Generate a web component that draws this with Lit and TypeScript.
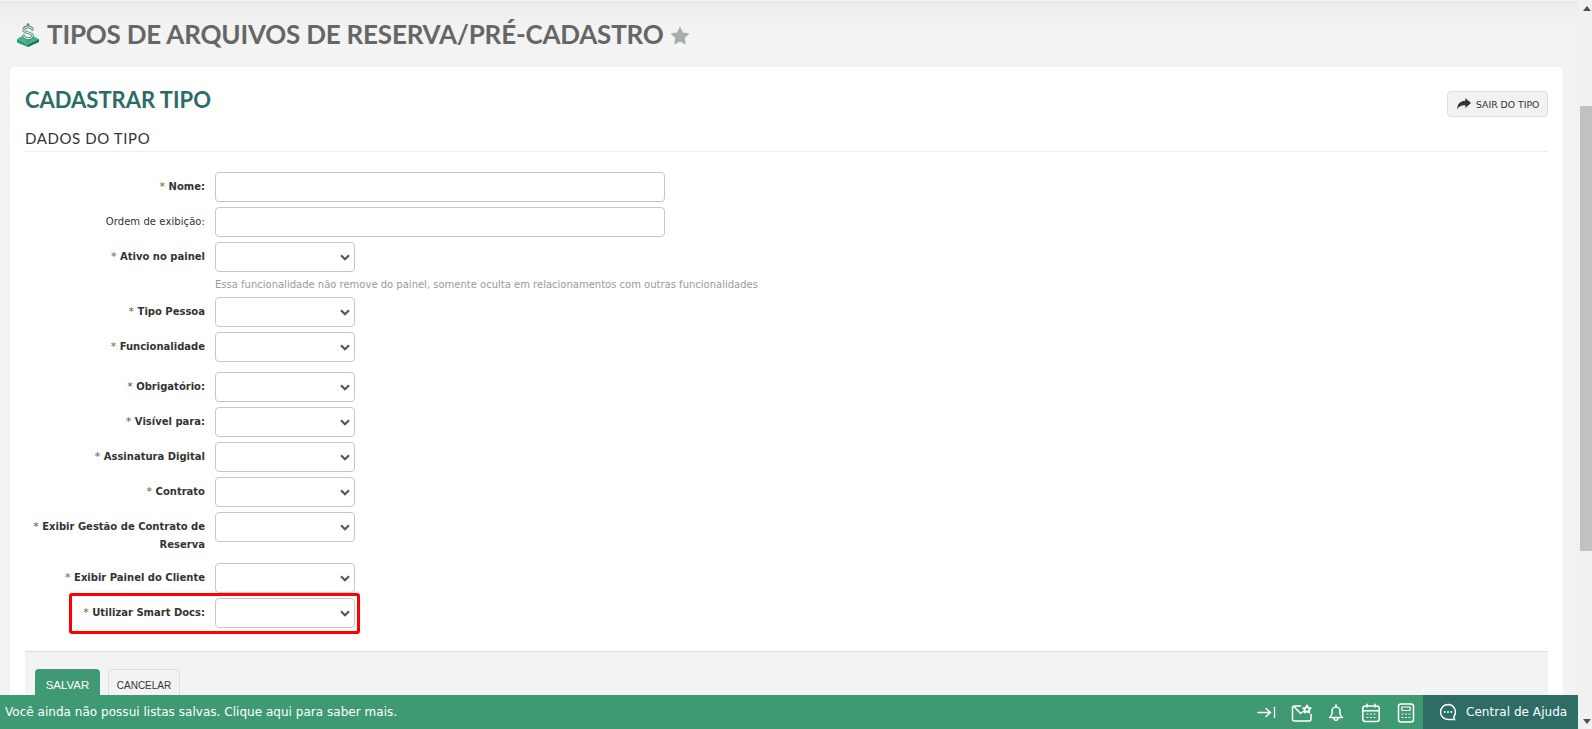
import { LitElement, html, css, svg } from "lit";
import { customElement } from "lit/decorators.js";

type Row = { label: string; req?: boolean; plain?: boolean; kind: "input" | "select"; hint?: string; cls?: string; star?: string; red?: boolean };

const ROWS: Row[] = [
  { label: "Nome:", req: true, kind: "input", star: "brown" },
  { label: "Ordem de exibição:", plain: true, kind: "input" },
  { label: "Ativo no painel", req: true, kind: "select", star: "brown", hint: "Essa funcionalidade não remove do painel, somente oculta em relacionamentos com outras funcionalidades" },
  { label: "Tipo Pessoa", req: true, kind: "select", star: "brown" },
  { label: "Funcionalidade", req: true, kind: "select", star: "brown", cls: "gap" },
  { label: "Obrigatório:", req: true, kind: "select", star: "blue" },
  { label: "Visível para:", req: true, kind: "select", star: "blue" },
  { label: "Assinatura Digital", req: true, kind: "select", star: "gray" },
  { label: "Contrato", req: true, kind: "select", star: "brown" },
  { label: "Exibir Gestão de Contrato de Reserva", req: true, kind: "select", star: "gray", cls: "tall" },
  { label: "Exibir Painel do Cliente", req: true, kind: "select", star: "brown" },
  { label: "Utilizar Smart Docs:", req: true, kind: "select", star: "brown", red: true },
];

const chevron = html`<svg class="chev" width="10" height="7" viewBox="0 0 10 7"><path d="M1 1.2 5 5.2 9 1.2" fill="none" stroke="#555" stroke-width="2.1"/></svg>`;

const logo = html`<svg width="24" height="24" viewBox="0 0 24 24">
  <path d="M1 16 6 13 11.5 16.5 17 13 23 16 12 21.5Z" fill="#3fb68d"/>
  <path d="M1 16V19.5L12 24V21.5Z" fill="#2a9a76"/>
  <path d="M23 16V19L12 24V21.5Z" fill="#167059"/>
  <g fill="none" stroke-linecap="round">
    <path d="M16.5 6.5C16 4.6 14 4 12 4 9.6 4 7.8 5.2 7.8 7 7.8 10.5 16.5 9 16.5 12.6 16.5 14.5 14.4 15.6 12 15.6 9.8 15.6 8 14.6 7.4 12.8M12 1.6V4M12 15.6V18" stroke="#5c8f80" stroke-width="2.8"/>
    <path d="M16.5 6.5C16 4.6 14 4 12 4 9.6 4 7.8 5.2 7.8 7 7.8 10.5 16.5 9 16.5 12.6 16.5 14.5 14.4 15.6 12 15.6 9.8 15.6 8 14.6 7.4 12.8" stroke="#f4f7f6" stroke-width="1"/>
  </g>
</svg>`;

const star = html`<svg width="20" height="19" viewBox="0 0 20 19"><path d="M10 .6 12.9 6.6 19.5 7.5 14.7 12.1 15.9 18.7 10 15.5 4.1 18.7 5.3 12.1.5 7.5 7.1 6.6Z" fill="#a6aeac"/></svg>`;

const share = html`<svg width="14" height="12" viewBox="0 0 14 12"><path d="M8.4 0 14 5 8.4 10V7.2C4.6 7.2 2 8 .2 11.4.2 6.6 3 3 8.4 2.8Z" fill="#333"/></svg>`;

const ICON = (c: unknown) => html`<span class="cell"><svg width="22" height="22" viewBox="0 0 22 22" fill="none" stroke="#fff" stroke-width="1.5" stroke-linecap="round" stroke-linejoin="round">${c}</svg></span>`;

const icons = [
  svg`<path d="M3 11.5H15.5M11 7.5 15.5 11.5 11 15.5"/><path d="M19.5 6.5V16.5" stroke-width="1.3"/>`,
  svg`<path d="M10.5 5H4.5A2 2 0 0 0 2.5 7V18A2 2 0 0 0 4.5 20H19A2 2 0 0 0 21 18V13.5"/><path d="M4.5 6 10.5 12.5 14 10"/><path d="M17 4.4 18.2 6.8 20.8 7.2 18.9 9 19.4 11.6 17 10.4 14.6 11.6 15.1 9 13.2 7.2 15.8 6.8Z" stroke-width="1.7"/>`,
  svg`<path d="M11 3.8V5.5M7 13V10A4 4 0 0 1 15 10V13L17 16.5H5ZM4.5 16.5H17.5M8.8 16.8C8.8 20 13.2 20 13.2 16.8" stroke-width="1.5"/>`,
  svg`<rect x="2.8" y="5" width="16.4" height="15.5" rx="2.5"/><path d="M3 9.8H19M7 3.2V6M15 3.2V6"/><path d="M7 13H8M10.5 13H11.5M14 13H15M7 16.5H8M10.5 16.5H11.5M14 16.5H15" stroke-width="1.2"/>`,
  svg`<rect x="3.5" y="3" width="15" height="18" rx="2.5"/><rect x="6.8" y="6" width="8.4" height="3.5" rx=".4" stroke-width="1.2"/><path d="M7 13H8M10.5 13H11.5M14 13H15M7 16.5H8M10.5 16.5H11.5M14 16.5H15" stroke-width="1.2"/>`,
];

@customElement("app-root")
export class AppRoot extends LitElement {
  static styles = css`
    :host { display: block; width: 1592px; height: 729px; overflow: hidden; position: relative; background: #f3f3f3; font-family: "DejaVu Sans", Verdana, sans-serif; }
    .shell { display: flex; height: 729px; }
    .main { width: 1578px; height: 729px; overflow: hidden; box-sizing: border-box; padding: 0 15px 0 10px; background: linear-gradient(#e9e9e9 0, #eeeeee 8px, #f3f3f3 30px, #f3f3f3 100%); border-top: 1px solid #f6f6f6; }
    .scroll { width: 14px; background: #f1f1f1; display: flex; flex-direction: column; align-items: center; position: relative; }
    .scroll .up { margin-top: 6px; width: 0; height: 0; border-left: 4px solid transparent; border-right: 4px solid transparent; border-bottom: 5px solid #505050; margin-left: 3px; }
    .scroll .thumb { width: 12px; align-self: flex-end; height: 445px; margin-top: 95px; background: #c1c1c1; }
    .scroll .track { flex: 1; }
    .scroll .down { margin-bottom: 5px; width: 0; height: 0; border-left: 4px solid transparent; border-right: 4px solid transparent; border-top: 5px solid #505050; margin-left: 3px; }
    .head { height: 66px; box-sizing: border-box; display: flex; align-items: center; padding: 0 0 0 6px; gap: 7px; }
    .head .logo { display: flex; margin-top: 1px; }
    h1 { margin: 0; font: 700 26px "Lato", sans-serif; color: #666; line-height: 34px; letter-spacing: -.2px; }
    .head .star { display: flex; margin: 3px 0 0 -1px; }
    .card { background: #fff; border-radius: 5px 5px 0 0; width: 1553px; height: 700px; box-sizing: border-box; padding: 0 15px; }
    .top { display: flex; justify-content: space-between; align-items: flex-start; height: 59px; }
    h2 { margin: 20px 0 0; font: 700 22px/26px "Lato", sans-serif; color: #2b6d65; }
    .exit { margin-top: 24px; width: 101px; height: 26px; box-sizing: border-box; border: 1px solid #ddd; border-radius: 4px; background: #f2f2f2; display: flex; align-items: center; padding-left: 9px; gap: 5px; font-size: 9.3px; color: #333; white-space: nowrap; }
    h3 { margin: 0; font: 400 15px/24px "Lato", sans-serif; color: #333; height: 25px; border-bottom: 1px solid #eee; letter-spacing: .6px; }
    .form { padding-top: 20px; }
    .row { display: flex; align-items: flex-start; margin-bottom: 5px; position: relative; }
    .row.gap { margin-bottom: 10px; }
    .row.tall { height: 46px; }
    label { width: 180px; flex: none; text-align: right; font-size: 10px; font-weight: 700; color: #333; line-height: 18px; padding-top: 6px; }
    label.plain { font-weight: 400; letter-spacing: .08px; }
    .s { font-weight: 400; font-size: 11px; }
    .brown { color: #7d6238; } .blue { color: #3d5a85; } .gray { color: #55595c; }
    .ctl { margin-left: 10px; display: flex; flex-direction: column; }
    input, select { display: block; box-sizing: border-box; height: 30px; border: 1px solid #c8c8c8; border-radius: 4px; background: #fff; margin: 0; outline: none; }
    input { width: 450px; }
    select { width: 140px; appearance: none; -webkit-appearance: none; }
    .sel { position: relative; width: 140px; }
    .chev { position: absolute; right: 5px; top: 12px; }
    .hint { font-size: 10px; line-height: 15px; color: #9a9a9a; padding-top: 5px; height: 15px; white-space: nowrap; }
    .red { position: absolute; left: 44px; top: -5px; width: 291px; height: 41px; box-sizing: border-box; border: 3px solid #ff0000; border-radius: 3px; pointer-events: none; }
    .foot { margin-top: 23px; background: #f3f3f3; border-top: 1px solid #ddd; padding: 17px 10px 0; display: flex; gap: 8px; height: 60px; font-family: "Liberation Sans", Arial, sans-serif; }
    .btn { height: 32px; box-sizing: border-box; border-radius: 4px; display: flex; align-items: center; justify-content: center; font-size: 11.5px; }
    .save { width: 65px; background: #3f9a74; color: #fff; }
    .cancel { width: 72px; border: 1px solid #ddd; color: #333; background: #f3f3f3; font-size: 10px; }
    .bar { position: absolute; left: 0; bottom: 0; width: 1578px; height: 34px; background: #3f9a74; color: #fff; display: flex; align-items: center; }
    .bar .msg { flex: 1; padding-left: 5px; font-size: 12px; letter-spacing: .03px; }
    .cell { width: 35px; height: 34px; display: flex; align-items: center; justify-content: center; }
    .help { width: 155px; height: 34px; background: #2e6d65; display: flex; align-items: center; padding-left: 16px; box-sizing: border-box; gap: 9px; font-size: 12px; white-space: nowrap; letter-spacing: .05px; }
    .help svg { flex: none; }
  `;

  renderRow(r: Row) {
    return html`<div class="row ${r.cls ?? ""}">
      ${r.red ? html`<div class="red"></div>` : ""}
      <label class=${r.plain ? "plain" : ""}>${r.req ? html`<span class="s ${r.star}">* </span>` : ""}${r.label}</label>
      <div class="ctl">
        ${r.kind === "input" ? html`<input type="text" />` : html`<div class="sel"><select></select>${chevron}</div>`}
        ${r.hint ? html`<div class="hint">${r.hint}</div>` : ""}
      </div>
    </div>`;
  }

  render() {
    return html`<div class="shell">
      <div class="main">
        <div class="head"><span class="logo">${logo}</span><h1>TIPOS DE ARQUIVOS DE RESERVA/PRÉ-CADASTRO</h1><span class="star">${star}</span></div>
        <div class="card">
          <div class="top"><h2>CADASTRAR TIPO</h2><div class="exit">${share}<span>SAIR DO TIPO</span></div></div>
          <h3>DADOS DO TIPO</h3>
          <div class="form">${ROWS.map((r) => this.renderRow(r))}</div>
          <div class="foot"><div class="btn save">SALVAR</div><div class="btn cancel">CANCELAR</div></div>
        </div>
      </div>
      <div class="scroll"><div class="up"></div><div class="thumb"></div><div class="track"></div><div class="down"></div></div>
    </div>
    <div class="bar">
      <div class="msg">Você ainda não possui listas salvas. Clique aqui para saber mais.</div>
      ${icons.map(ICON)}
      <div class="help">
        <svg width="18" height="18" viewBox="0 0 18 18" fill="none" stroke="#fff" stroke-width="1.5"><path d="M9 1.5A7.5 7.5 0 1 0 9 16.5H15.5L14.8 13.6A7.5 7.5 0 0 0 9 1.5Z"/><circle cx="5.7" cy="9" r="1" fill="#fff" stroke="none"/><circle cx="9" cy="9" r="1" fill="#fff" stroke="none"/><circle cx="12.3" cy="9" r="1" fill="#fff" stroke="none"/></svg>
        <span>Central de Ajuda</span>
      </div>
    </div>`;
  }
}
